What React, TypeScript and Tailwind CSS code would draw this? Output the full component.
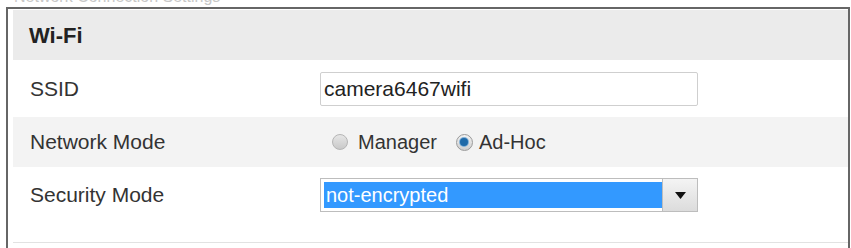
export default function App() {
  return (
    <div className="w-[851px] h-[248px] overflow-hidden bg-white font-['Liberation_Sans',Arial,sans-serif] text-[#333]">
      {/* cropped caption above the panel */}
      <div className="h-[7px] overflow-hidden pl-[14px]">
        <div className="-mt-[12px] text-[16px] leading-[18px] text-[#c8c8c8]">Network Connection Settings</div>
      </div>
      <div className="ml-[6px] w-[844px] h-[241px] border-t-2 border-l-2 border-r-2 border-[#666] pl-[5px] pt-[1px]">
        <div className="h-[50px] bg-[#ebebeb] flex items-center pl-[16px]">
          <span className="text-[22px] font-bold text-[#222]">Wi-Fi</span>
        </div>

        <div className="h-[57px] flex items-center">
          <div className="w-[307px] pl-[17px] text-[21px]">SSID</div>
          <div className="w-[378px] h-[34px] border border-[#cfcfcf] rounded-[2px] flex items-center pl-[3px] text-[21px] text-[#222]">
            camera6467wifi
          </div>
        </div>

        <div className="h-[50px] bg-[#f3f3f3] flex items-center">
          <div className="w-[319px] pl-[17px] text-[21px]">Network Mode</div>
          <span className="w-[16px] h-[16px] rounded-full border border-[#b5b5b5] bg-gradient-to-b from-[#e6e6e6] to-[#c9c9c9]" />
          <span className="ml-[10px] text-[20px] text-[#333]">Manager</span>
          <span className="ml-[19px] w-[17px] h-[17px] rounded-full border border-[#9a9a9a] bg-gradient-to-b from-[#f2f2f2] to-[#cfcfcf] flex items-center justify-center">
            <span className="w-[8px] h-[8px] rounded-full bg-[#1f6aa8] ring-1 ring-[#7fb0d8]" />
          </span>
          <span className="ml-[6px] text-[20px] text-[#333]">Ad-Hoc</span>
        </div>

        <div className="h-[76px] border-b border-[#e2e2e2] pt-[11px] flex items-start">
          <div className="w-[307px] pl-[17px] text-[21px] h-[34px] flex items-center">Security Mode</div>
          <div className="w-[378px] h-[34px] border border-[#bdbdbd] flex">
            <div className="flex-1 m-[3px] mr-0 bg-[#3399ff] flex items-center pl-[2px] text-[20px] text-white">
              not-encrypted
            </div>
            <div className="w-[35px] border-l border-[#bdbdbd] bg-gradient-to-b from-[#f4f4f4] to-[#dcdcdc] flex items-center justify-center">
              <svg width="11" height="7" viewBox="0 0 11 7">
                <path d="M0 0 L11 0 L5.5 7 Z" fill="#111" />
              </svg>
            </div>
          </div>
        </div>
      </div>
    </div>
  )
}
